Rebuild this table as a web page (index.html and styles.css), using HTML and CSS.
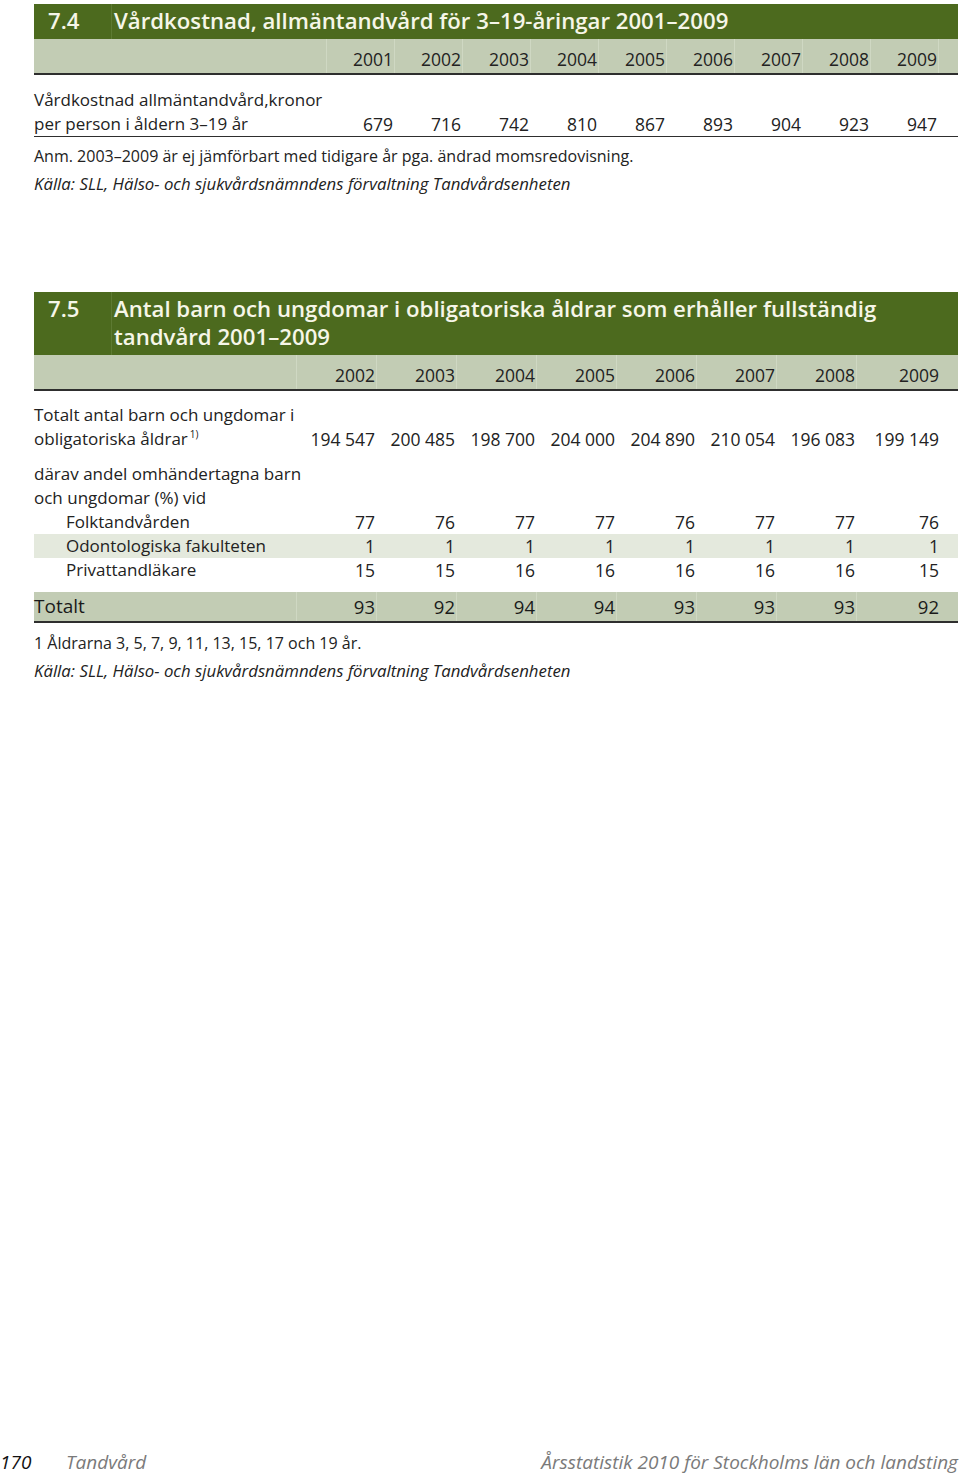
FILE: index.html
```html
<!DOCTYPE html>
<html lang="sv">
<head>
<meta charset="utf-8">
<title>Tandvård</title>
<link rel="stylesheet" href="styles.css">
</head>
<body>
<main class="page">
  <section class="tbl t74">
    <div class="title">
      <div class="num">7.4</div>
      <div class="ttl">Vårdkostnad, allmäntandvård för 3–19-åringar 2001–2009</div>
    </div>
    <div class="grid g74 head">
      <div class="lbl"></div>
      <div class="c">2001</div><div class="c">2002</div><div class="c">2003</div><div class="c">2004</div><div class="c">2005</div><div class="c">2006</div><div class="c">2007</div><div class="c">2008</div><div class="c">2009</div>
      <div class="c trail"></div>
    </div>
    <div class="grid g74 row ruled">
      <div class="lbl">Vårdkostnad allmäntandvård,kronor<br>per person i åldern 3–19 år</div>
      <div class="c">679</div><div class="c">716</div><div class="c">742</div><div class="c">810</div><div class="c">867</div><div class="c">893</div><div class="c">904</div><div class="c">923</div><div class="c">947</div>
      <div class="c trail"></div>
    </div>
    <p class="note">Anm. 2003–2009 är ej jämförbart med tidigare år pga. ändrad momsredovisning.</p>
    <p class="note src">Källa: SLL, Hälso- och sjukvårdsnämndens förvaltning Tandvårdsenheten</p>
  </section>

  <section class="tbl t75">
    <div class="title">
      <div class="num">7.5</div>
      <div class="ttl"><span class="tl">Antal barn och ungdomar i obligatoriska åldrar som erhåller fullständig</span><span class="tl">tandvård 2001–2009</span></div>
    </div>
    <div class="grid g75 head">
      <div class="lbl"></div>
      <div class="c">2002</div><div class="c">2003</div><div class="c">2004</div><div class="c">2005</div><div class="c">2006</div><div class="c">2007</div><div class="c">2008</div><div class="c last">2009</div>
    </div>
    <div class="grid g75 row first">
      <div class="lbl">Totalt antal barn och ungdomar i<br>obligatoriska åldrar<sup>1)</sup></div>
      <div class="c">194 547</div><div class="c">200 485</div><div class="c">198 700</div><div class="c">204 000</div><div class="c">204 890</div><div class="c">210 054</div><div class="c">196 083</div><div class="c last">199 149</div>
    </div>
    <div class="grid g75 row sect">
      <div class="lbl">därav andel omhändertagna barn<br>och ungdomar (%) vid</div>
    </div>
    <div class="grid g75 row sub">
      <div class="lbl">Folktandvården</div>
      <div class="c">77</div><div class="c">76</div><div class="c">77</div><div class="c">77</div><div class="c">76</div><div class="c">77</div><div class="c">77</div><div class="c last">76</div>
    </div>
    <div class="grid g75 row sub shade">
      <div class="lbl">Odontologiska fakulteten</div>
      <div class="c">1</div><div class="c">1</div><div class="c">1</div><div class="c">1</div><div class="c">1</div><div class="c">1</div><div class="c">1</div><div class="c last">1</div>
    </div>
    <div class="grid g75 row sub">
      <div class="lbl">Privattandläkare</div>
      <div class="c">15</div><div class="c">15</div><div class="c">16</div><div class="c">16</div><div class="c">16</div><div class="c">16</div><div class="c">16</div><div class="c last">15</div>
    </div>
    <div class="grid g75 total">
      <div class="lbl">Totalt</div>
      <div class="c">93</div><div class="c">92</div><div class="c">94</div><div class="c">94</div><div class="c">93</div><div class="c">93</div><div class="c">93</div><div class="c last">92</div>
    </div>
    <p class="note">1 Åldrarna 3, 5, 7, 9, 11, 13, 15, 17 och 19 år.</p>
    <p class="note src">Källa: SLL, Hälso- och sjukvårdsnämndens förvaltning Tandvårdsenheten</p>
  </section>
</main>
<footer class="foot">
  <div class="left"><span class="pg">170</span><span class="chap">Tandvård</span></div>
  <div class="right">Årsstatistik 2010 för Stockholms län och landsting</div>
</footer>
</body>
</html>
```

FILE: styles.css
```css
html, body {
  margin: 0;
  padding: 0;
  background: #ffffff;
}
body {
  font-family: "Open Sans", "Noto Sans", "Liberation Sans", sans-serif;
  color: #222;
  min-height: 1477px;
  display: flex;
  flex-direction: column;
}
.page {
  padding: 4px 2px 0 34px;
}
.tbl {
  width: 924px;
}
.t75 {
  margin-top: 94px;
}

/* title bar */
.title {
  display: flex;
  background: #4c6a1e;
  color: #f6f6e8;
  font-weight: 600;
  font-size: 22.2px;
  line-height: 28px;
}
.title .num {
  width: 63px;
  flex: none;
  padding: 3px 0 4px 14px;
  border-right: 1px solid #5d7a32;
}
.title .ttl {
  padding: 3px 20px 4px 2px;
  white-space: nowrap;
  display: flex;
  flex-direction: column;
}
.title .tl {
  display: block;
  height: 28px;
}

/* grids */
.grid {
  display: grid;
  font-size: 17px;
  line-height: 24px;
}
.g74 {
  grid-template-columns: 293px repeat(9, 68px) 19px;
}
.g75 {
  grid-template-columns: 262px repeat(7, 80px) 101px;
}
.c {
  text-align: right;
  padding-right: 2px;
  align-self: end;
  font-size: 17.5px;
}
.g75 .c {
  padding-right: 1px;
}
.g75 .c.last {
  padding-right: 18px;
}

.head {
  background: #c2ccb4;
  border-bottom: 2px solid #2e2e2e;
}
.head > div {
  padding-top: 8px;
  padding-bottom: 2px;
  align-self: stretch;
}
.head .c {
  border-left: 1px solid #cfd8c3;
}
.g74.head .c {
  margin-left: -1px;
}

.row .lbl {
  white-space: nowrap;
}
.t74 .row {
  padding-top: 13px;
}
.ruled {
  border-bottom: 1px solid #2e2e2e;
}
.t75 .first {
  padding-top: 12px;
}
.t75 .sect {
  padding-top: 11px;
}
.sub .lbl {
  padding-left: 32px;
}
.shade {
  background: #e4e9dd;
}
sup {
  font-size: 10px;
  line-height: 0;
  vertical-align: 7px;
  margin-left: 2px;
}

.total {
  margin-top: 10px;
  background: #c2ccb4;
  border-bottom: 2px solid #2e2e2e;
  font-size: 19px;
  line-height: 29px;
  color: #1a1a1a;
}
.total .c {
  font-size: 18.5px;
  border-left: 1px solid #cfd8c3;
  align-self: stretch;
}

.note {
  margin: 0;
  font-size: 16px;
  line-height: 28px;
  color: #222;
}
.src {
  font-style: italic;
  font-size: 16.8px;
}
.ruled + .note {
  margin-top: 5px;
}
.total + .note {
  margin-top: 6px;
}

/* footer */
.foot {
  margin-top: auto;
  display: flex;
  justify-content: space-between;
  align-items: baseline;
  padding: 0 2px 1px 0;
  font-style: italic;
  font-size: 19px;
  line-height: 28px;
  color: #7a7a7a;
}
.foot .pg {
  color: #111;
  display: inline-block;
  width: 66px;
}
```
